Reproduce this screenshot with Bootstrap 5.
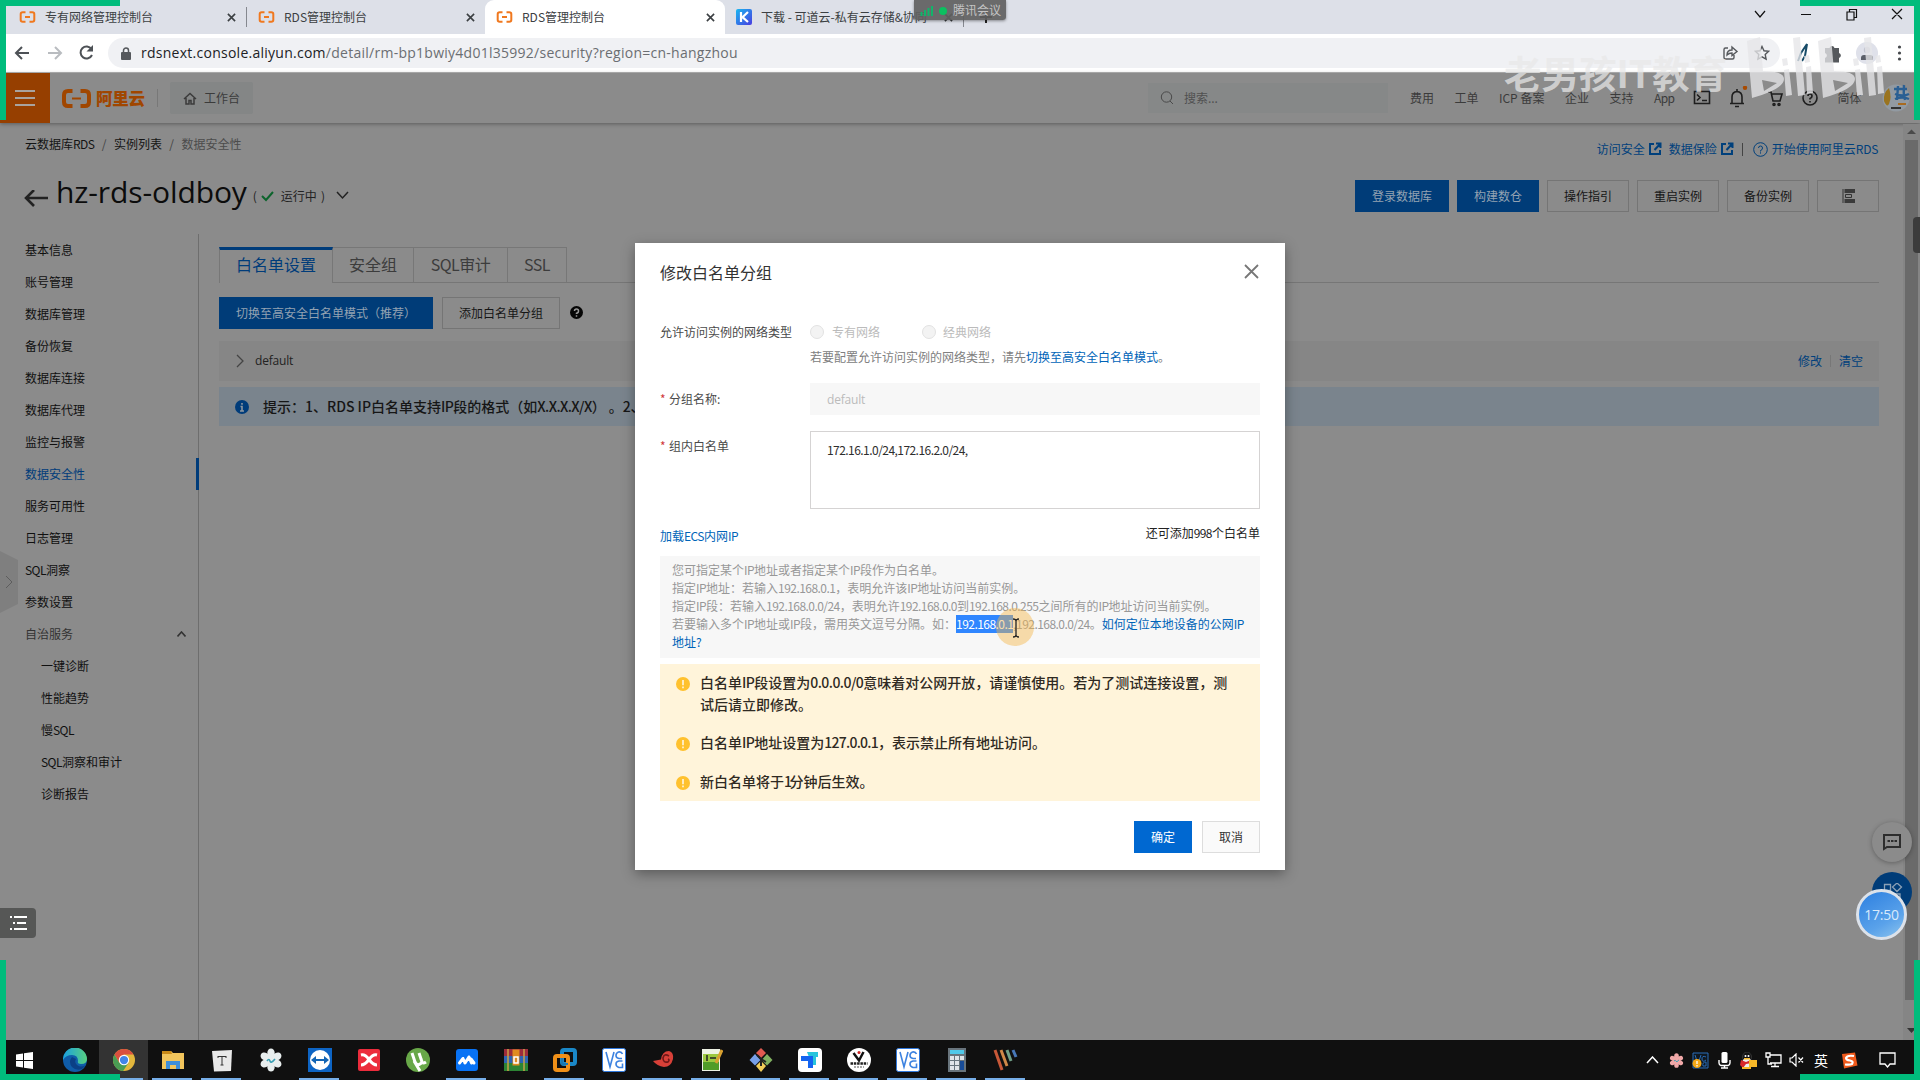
<!DOCTYPE html>
<html lang="zh-CN">
<head>
<meta charset="utf-8">
<title>RDS管理控制台</title>
<link rel="stylesheet" href="https://cdn.jsdelivr.net/npm/bootstrap@5.3.0/dist/css/bootstrap.min.css">
<style>
body{width:1920px;height:1080px;overflow:hidden;background:#8b8b8b;color:#161616;font-family:"Noto Sans CJK SC","Liberation Sans",sans-serif;font-size:12px;line-height:18px;-webkit-font-smoothing:antialiased}
svg{display:block;flex:none}
a{text-decoration:none}
.n{letter-spacing:-.55px}
.ui{font-family:"Open Sans","Noto Sans CJK SC",sans-serif}
/* browser chrome */
.tabstrip{height:34px;background:#dde0e8;color:#3c4043}
.btab{width:238px;height:34px;padding:0 10px 0 11px;white-space:nowrap}
.btab.on{background:#fff;border-radius:9px 9px 0 0;width:240px}
.btab .ttl{flex:1;margin-left:9px;overflow:hidden}
.vsep{width:1px;height:20px;background:#85888f}
.toolbar{height:39px;background:#fff;border-bottom:1px solid #b5b5b5}
.omni{height:30px;width:1672px;margin-left:9px;border-radius:15px;background:#f0f1f4;color:#6b6e72;font-size:14px}
.omni b{font-weight:400;color:#202124}
.url{letter-spacing:.26px;margin-left:10px}
/* console header */
.chead{height:50px;box-shadow:0 1px 4px rgba(0,0,0,.35);position:relative;background:#8b8b8b;color:#3b3b3b}
.burger{width:50px;height:50px;background:#963f00}
.brand{color:#a04600;font-size:16.5px;font-weight:900;letter-spacing:-.2px}
.bench{width:83px;height:32px;background:#848686;border-radius:2px}
.srch{width:240px;height:30px;background:#868888;color:#505050}
.dk{color:#141414}
.bl{color:#00407c}
.title-row{height:44px}
.h-name{font-size:30px;line-height:36px;color:#0c0c0c;letter-spacing:-.1px}
.cbtn{height:32px;border:1px solid #757575;border-radius:0;padding:0;font-size:12px;line-height:28px;color:#161616;background:#8b8b8b;text-align:center}
.cbtn.pri{background:#003c78;border-color:#003c78;color:#93a2b2}
.side{width:199px;border-right:1px solid #6e6e6e}
.side .it{height:32px;line-height:32px;padding-left:25px;color:#101010}
.side .sub{padding-left:41px}
.side .cur{color:#003c7a;border-right:3px solid #003c7a;margin-right:-1px}
.ctabs{height:36px;border-bottom:1px solid #767676}
.ctabs div{height:35px;line-height:32px;font-size:16px;border:1px solid #777;border-left:0;border-bottom:0;text-align:center;color:#3c3c3c}
.ctabs .act{border-left:1px solid #777;border-top:3px solid #003c7a;height:36px;line-height:28px;color:#003c7a;background:#8b8b8b}
.grow-row{height:40px;background:#868686}
.tip{height:39px;background:#7a848d;font-size:14px;font-weight:500;color:#161616;text-spacing-trim:space-all}
/* dialog */
.dlg{position:absolute;left:635px;top:243px;width:650px;height:627px;background:#fff;box-shadow:0 4px 12px rgba(0,0,0,.35);padding:0 25px;color:#444}
.dlg .bl{color:#0064b8}
.lab{width:150px;color:#4a4a4a}
.rad{width:14px;height:14px;border-radius:50%;background:#f3f3f3;border:1px solid #e2e2e2}
.inp{width:450px;height:32px;background:#f7f7f7;color:#bbb;padding-left:17px;line-height:33px}
.area{width:450px;height:78px;border:1px solid #d5d3d3;padding:9px 16px;color:#2e2e2e}
.star{color:#d0383a;width:9px}
.note{height:102px;background:#f7f7f7;color:#989898;padding:5px 12px;white-space:nowrap}
.selx{background:#2f86ff;color:#fff;display:inline-block}
.warn{height:137px;background:#fff4da;font-size:14px;line-height:22px;font-weight:500;color:#2f2a22;padding:7px 24px 0 16px}
.warn svg{margin:6px 10px 0 0}
.fbtn{width:58px;height:32px;line-height:30px;border-radius:0;padding:0;font-size:12px;border:1px solid #ddd;background:#fafafa;color:#333}
.fbtn.ok{background:#0068d1;border-color:#0068d1;color:#fff;}
/* taskbar */
.task{position:absolute;left:0;top:1040px;width:1920px;height:40px;background:#101010}
.tk{width:49px;height:40px;position:relative}
.tk.run::after{content:"";position:absolute;left:4px;right:5px;bottom:0;height:2px;background:#76aee8}
/* overlays */
.ov{position:absolute}
.gr{position:absolute;background:#00bc7c}
.fab{width:40px;height:40px;border-radius:50%}
</style>
</head>
<body class="position-relative d-flex flex-column">
<svg width="0" height="0" style="position:absolute">
 <symbol id="ali" viewBox="0 0 16 12"><path d="M6 1.2H3.2Q1.2 1.2 1.2 3V9Q1.2 10.8 3.2 10.8H6M10 1.2h2.800Q14.800 1.200 14.800 3V9q0 1.800-2 1.800H10M5.500 6h5" fill="none" stroke="currentColor" stroke-width="2"/></symbol>
 <symbol id="cls" viewBox="0 0 10 10"><path d="M1 1l8 8M9 1L1 9" fill="none" stroke="currentColor" stroke-width="1.800"/></symbol>
 <symbol id="ext" viewBox="0 0 14 14"><path d="M6 2H2v10h10V8M8 1.500h4.500V6M12.500 1.500L6.500 8" fill="none" stroke="currentColor" stroke-width="2"/></symbol>
 <symbol id="vnc" viewBox="0 0 24 24"><rect x=".5" y=".5" width="23" height="23" rx="2" fill="#fff" stroke="#2f78dc"/><path d="M4 4l4 15 4-15M20.500 6q-1-2.500-4-2-2.500 1-2.500 3.500t3 3h3M20.500 13h-3.500q-3 .5-3 3t3 3.500h3.500v-4" fill="none" stroke="#3c82e0" stroke-width="1.600"/></symbol>
 <symbol id="warn" viewBox="0 0 14 14"><circle cx="7" cy="7" r="7" fill="#ffc12e"/><path d="M7 3v5.300M7 9.600v1.600" stroke="#fff3d8" stroke-width="1.700"/></symbol>
 <symbol id="flower" viewBox="0 0 24 24"><g fill="currentColor"><ellipse cx="12" cy="5" rx="3.700" ry="4.600"/><ellipse cx="12" cy="19" rx="3.700" ry="4.600"/><ellipse cx="12" cy="5" rx="3.700" ry="4.600" transform="rotate(60 12 12)"/><ellipse cx="12" cy="5" rx="3.700" ry="4.600" transform="rotate(120 12 12)"/><ellipse cx="12" cy="5" rx="3.700" ry="4.600" transform="rotate(240 12 12)"/><ellipse cx="12" cy="5" rx="3.700" ry="4.600" transform="rotate(300 12 12)"/><circle cx="12" cy="12" r="5"/></g><path d="M8 13q2-3 3 0t5-2" fill="none" stroke="#3aa0b4" stroke-width="1.600"/></symbol>
</svg>

<!-- browser tabs -->
<div class="tabstrip d-flex align-items-center ps-2 flex-shrink-0">
 <div class="btab d-flex align-items-center"><svg width="17" height="12" color="#f0781e"><use href="#ali"/></svg><span class="ttl">专有网络管理控制台</span><svg width="9" height="9"><use href="#cls"/></svg></div>
 <div class="vsep"></div>
 <div class="btab d-flex align-items-center"><svg width="17" height="12" color="#f0781e"><use href="#ali"/></svg><span class="ttl">RDS管理控制台</span><svg width="9" height="9"><use href="#cls"/></svg></div>
 <div class="btab on d-flex align-items-center"><svg width="17" height="12" color="#f0781e"><use href="#ali"/></svg><span class="ttl">RDS管理控制台</span><svg width="9" height="9"><use href="#cls"/></svg></div>
 <div class="btab d-flex align-items-center"><svg width="16" height="16" viewBox="0 0 16 16"><defs><linearGradient id="kg" x2="1" y2="1"><stop stop-color="#18b8f0"/><stop offset="1" stop-color="#4a3ce0"/></linearGradient></defs><rect width="16" height="16" rx="2" fill="url(#kg)"/><path d="M5 3v10M12 3L6.500 8.200 12 13" fill="none" stroke="#fff" stroke-width="2.200"/></svg><span class="ttl">下载 - 可道云-私有云存储&amp;协同</span><svg width="9" height="9"><use href="#cls"/></svg></div>
 <div class="vsep"></div>
 <svg class="ms-3" width="12" height="12"><path d="M6 0v12M0 6h12" stroke="#222" stroke-width="2"/></svg>
 <svg class="ms-auto" style="margin-right:17px;margin-top:-6px" width="150" height="14" viewBox="0 0 150 14" fill="none" stroke="#111" stroke-width="1.200"><path d="M2 4l5 6 5-6M48 7.500h10M94 5h7v8h-7zM96.500 5V2.500h7v8H101M139 2l10 10M149 2l-10 10"/></svg>
</div>
<!-- address bar -->
<div class="toolbar d-flex align-items-center flex-shrink-0">
 <svg style="margin-left:14px" width="85" height="18" viewBox="0 0 85 18" fill="none" stroke-width="2"><path d="M15 9H2M8 3L2 9l6 6" stroke="#4d5156"/><path d="M34 9h13M41 3l6 6-6 6" stroke="#b9bcc0"/><path d="M77.500 5A6 6 0 1 0 78 11" stroke="#4d5156"/><path d="M79 1v6.500h-6.500z" fill="#4d5156"/></svg>
 <div class="omni d-flex align-items-center ui">
  <svg style="margin-left:13px" width="10" height="13" viewBox="0 0 10 13"><rect y="5" width="10" height="8" rx="1" fill="#55585c"/><path d="M2.500 5V3.500a2.500 2.500 0 0 1 5 0V5" fill="none" stroke="#55585c" stroke-width="1.500"/></svg>
  <span class="url"><b>rdsnext.console.aliyun.com</b>/detail/rm-bp1bwiy4d01l35992/security?region=cn-hangzhou</span>
  <svg class="ms-auto" style="margin-right:9px" width="50" height="16" viewBox="0 0 50 16" fill="none" stroke="#55585c" stroke-width="1.400"><path d="M7 3H4.500Q3 3 3 4.500v8Q3 14 4.500 14h7q1.500 0 1.500-1.500V10M6 10q0-5 5-5V2l5 4.500-5 4V8q-3 0-5 2zM41 1.500l2 4.300 4.600.5-3.400 3.200.9 4.700L41 11.900l-4.100 2.300.9-4.700-3.400-3.200 4.600-.5z"/></svg>
 </div>
 <svg style="margin-left:15px" width="110" height="22" viewBox="0 0 110 22"><path d="M7 19l3-5 2-12-6 9-3 8" fill="none" stroke="#174b68" stroke-width="2"/><path d="M30 6h4.500a2.600 2.600 0 0 1 5 0h4.500v5a2.600 2.600 0 0 1 0 5v4.500H30v-4.500a2.600 2.600 0 0 0 0-5z" fill="#55585c"/><circle cx="72" cy="11" r="11" fill="#dfe1ea"/><circle cx="72" cy="8" r="3.200" fill="#c2c5d0"/><path d="M66 18v-2q0-3 3-3h6q3 0 3 3v2z" fill="#5b5f69"/><g fill="#44474b"><circle cx="104.500" cy="5" r="1.600"/><circle cx="104.500" cy="11" r="1.600"/><circle cx="104.500" cy="17" r="1.600"/></g></svg>
</div>
<!-- console header -->
<div class="chead d-flex align-items-center flex-shrink-0">
 <div class="burger d-flex align-items-center"><svg style="margin-left:15px" width="20" height="18"><path d="M0 2h20M0 9h20M0 16h20" stroke="#a9a39e" stroke-width="2"/></svg></div>
 <svg style="margin-left:12px" width="29" height="19" viewBox="0 0 29 19" fill="none" stroke="#a04600"><path d="M10.500 2H6Q2 2 2 6v7q0 4 4 4h4.500M18.500 2H23q4 0 4 4v7q0 4-4 4h-4.500" stroke-width="4"/><path d="M10 9.500h9" stroke-width="2"/></svg>
 <span class="brand" style="margin-left:5px">阿里云</span>
 <div style="width:1px;height:18px;background:#787878;margin-left:12px"></div>
 <div class="bench d-flex align-items-center" style="margin-left:12px"><svg style="margin-left:13px" width="14" height="13" viewBox="0 0 14 13" fill="none" stroke="#3b3b3b" stroke-width="1.500"><path d="M1 7l6-5.500L13 7M3 6v6h3V8.500h2V12h3V6"/></svg><span style="margin-left:7px">工作台</span></div>
 <div class="srch d-flex align-items-center" style="margin-left:895px"><svg style="margin-left:12px" width="14" height="14" fill="none" stroke="#4a4a4a"><circle cx="6.500" cy="6" r="5.200"/><path d="M10 10l3 3"/></svg><span style="margin-left:10px">搜索...</span></div>
 <div class="d-flex align-items-center" style="margin-left:22px;gap:20.5px">
  <span>费用</span><span>工单</span><span>ICP 备案</span><span>企业</span><span>支持</span><span class="n">App</span>
 </div>
 <svg style="margin-left:19px" width="128" height="24" viewBox="0 0 128 24" fill="none" stroke="#1e1e1e" stroke-width="1.600"><path d="M1.500 5.500h15v12h-15zM4 8.500l3 3-3 3M9 14.500h5M39 17V11q0-5 5-5.500 5 .5 5 5.500v6M37 17.500h14M44 3v2.500M42 20.500h4"/><circle cx="52" cy="1.800" r="2.200" fill="#a84a00" stroke="none"/><path d="M75 6h3l2 9h7l2-7H79"/><circle cx="81" cy="18.500" r="1"/><circle cx="86" cy="18.500" r="1"/><circle cx="117" cy="12" r="7"/><path d="M115 10q0-2 2-2t2 2-2 2.500v1M117 15v1.500"/></svg>
 <span style="margin-left:16px">简体</span>
 <svg class="ms-auto" style="margin-right:9px" width="29" height="32" viewBox="0 0 29 32"><circle cx="14" cy="16" r="13.500" fill="#929aa2"/><path d="M7 6q-6 5-5 13 3 7 5 3 3-7 0-16" fill="#9a7420"/><path d="M12 7h13M13 12q8 3 14 0M16 4l-1 14M22 3q-1 8 1 15M13 17q7-3 14 0" stroke="#2a5f93" stroke-width="2.400" fill="none"/><path d="M9 26h10" stroke="#333" stroke-width="2"/><path d="M16 22h8" stroke="#a86a20" stroke-width="2"/></svg>
</div>
<!-- page heading -->
<div class="d-flex flex-shrink-0 justify-content-between" style="padding:12px 42px 0 25px;height:48px">
 <div class="dk">云数据库<span class="n">RDS</span> <span style="margin:0 4.700px;color:#444"> / </span> 实例列表 <span style="margin:0 4.700px;color:#444"> / </span> <span style="color:#4c4c4c">数据安全性</span></div>
 <div class="bl d-flex align-items-center" style="height:28px">访问安全<svg style="margin:0 7px 0 3px" width="14" height="14"><use href="#ext"/></svg>数据保险<svg style="margin:0 8px 0 3px" width="14" height="14"><use href="#ext"/></svg><span style="width:1px;height:13px;background:#444;margin-right:10px"></span><svg style="margin-right:4px" width="15" height="15" fill="none" stroke="currentColor"><circle cx="7.500" cy="7.500" r="6.800"/><path d="M5.500 6q0-2 2-2t2 2-2 2.500v1M7.500 10.300v1.300"/></svg>开始使用阿里云<span class="n" style="letter-spacing:-.3px">RDS</span></div>
</div>
<div class="title-row d-flex align-items-center flex-shrink-0" style="padding:0 41px 0 24px">
 <svg style="margin-top:14px" width="25" height="20" fill="none" stroke="#222" stroke-width="2.600"><path d="M24 8H2M10 0L2 8l8 8"/></svg>
 <span class="h-name ui" style="margin:-2px 0 0 7px">hz-rds-oldboy</span>
 <span class="d-flex align-items-center" style="margin:5px 0 0 6px;color:#222">(<svg style="margin:0 7px 0 4px" width="13" height="12" fill="none" stroke="#0c642c" stroke-width="2"><path d="M1 6l4 4 7-8"/></svg>运行中<span style="margin-left:4px">)</span><svg style="margin-left:11px" width="13" height="9" fill="none" stroke="#222" stroke-width="1.500"><path d="M1 1l5.500 6L12 1"/></svg></span>
 <div class="ms-auto d-flex gap-2" style="margin-top:6px">
  <button class="btn cbtn pri" style="width:94px">登录数据库</button><button class="btn cbtn pri" style="width:82px">构建数仓</button><button class="btn cbtn" style="width:82px">操作指引</button><button class="btn cbtn" style="width:82px">重启实例</button><button class="btn cbtn" style="width:82px">备份实例</button><button class="btn cbtn d-flex justify-content-center align-items-center" style="width:62px"><svg width="13" height="14"><path d="M1 0v14" stroke="#333"/><path d="M2.500 2H13M2.500 12H13" stroke="#3a3a3a" stroke-width="4"/><path d="M3.500 5.500h6v3h-6z" fill="none" stroke="#333"/></svg></button>
 </div>
</div>
<!-- body -->
<div class="d-flex flex-grow-1" style="padding-top:19px">
 <nav class="side">
  <div class="it">基本信息</div><div class="it">账号管理</div><div class="it">数据库管理</div><div class="it">备份恢复</div><div class="it">数据库连接</div><div class="it">数据库代理</div><div class="it">监控与报警</div><div class="it cur">数据安全性</div><div class="it">服务可用性</div><div class="it">日志管理</div><div class="it"><span class="n">SQL</span>洞察</div><div class="it">参数设置</div>
  <div class="it d-flex justify-content-between align-items-center" style="color:#333;padding-right:12px">自治服务<svg width="9" height="6" fill="none" stroke="#333" stroke-width="1.600"><path d="M.5 5.500l4-4.500 4 4.500"/></svg></div>
  <div class="it sub">一键诊断</div><div class="it sub">性能趋势</div><div class="it sub">慢<span class="n">SQL</span></div><div class="it sub"><span class="n">SQL</span>洞察和审计</div><div class="it sub">诊断报告</div>
 </nav>
 <main class="flex-grow-1" style="padding:13px 41px 0 20px">
  <div class="ctabs d-flex"><div class="act" style="width:114px">白名单设置</div><div style="width:81px">安全组</div><div class="n" style="width:94px">SQL审计</div><div class="n" style="width:59px">SSL</div></div>
  <div class="d-flex align-items-center" style="margin-top:14px"><button class="btn cbtn pri" style="width:214px;text-align:left;padding-left:16px">切换至高安全白名单模式（推荐）</button><button class="btn cbtn" style="width:118px;margin-left:9px">添加白名单分组</button><svg style="margin:-2px 0 0 10px" width="13" height="13"><circle cx="6.500" cy="6.500" r="6.500" fill="#060606"/><path d="M4.500 5q0-2 2-2t2 2-2 2.300v.7M6.500 9.200v1.500" fill="none" stroke="#999" stroke-width="1.500"/></svg></div>
  <div class="grow-row d-flex align-items-center" style="margin-top:12px;padding:0 16px 0 17px"><svg width="8" height="14" fill="none" stroke="#444" stroke-width="1.300"><path d="M1 1l6 6-6 6"/></svg><span style="margin-left:11px;color:#222;letter-spacing:-.2px" class="ui">default</span><span class="ms-auto bl">修改</span><span style="width:1px;height:12px;background:#777;margin:0 8px"></span><span class="bl">清空</span></div>
  <div class="tip d-flex align-items-center" style="margin-top:6px;padding-left:16px"><svg width="14" height="14"><circle cx="7" cy="7" r="7" fill="#003c7a"/><path d="M7 3v1.800M5.500 6.500H7V11M5 11h4" fill="none" stroke="#8d97a0" stroke-width="1.600"/></svg><span style="margin:-2px 0 0 14px">提示：1、RDS IP白名单支持<span class="n">IP</span>段的格式（如<span style="letter-spacing:-.6px">X.X.X.X/X</span>）<span style="margin-left:3px">。</span>2、</span></div>
 </main>
</div>

<!-- page scrollbar and side handles -->
<div class="ov" style="left:1903px;top:124px;width:17px;height:916px;background:#858585"></div>
<div class="ov" style="left:1905px;top:140px;width:13px;height:860px;background:#6a6a6a"></div>
<svg class="ov" style="left:1907px;top:129px" width="9" height="6"><path d="M0 5l4.500-4.500L9 5z" fill="#4a4a4a"/></svg>
<svg class="ov" style="left:1907px;top:1028px" width="9" height="6"><path d="M0 0l4.500 5L9 0z" fill="#333"/></svg>
<div class="ov" style="left:1913px;top:217px;width:7px;height:36px;background:#3c3c3c;border-radius:4px 0 0 4px"></div>
<svg class="ov" style="left:0;top:551px" width="18" height="62"><path d="M0 0l18 9v44L0 62z" fill="#7f7f7f"/><path d="M6 25l6 6-6 6" fill="none" stroke="#5d5d5d"/></svg>
<div class="ov d-flex align-items-center" style="left:0;top:908px;width:36px;height:30px;background:#565756;border-radius:0 4px 4px 0"><svg style="margin-left:10px" width="17" height="14"><path d="M0 1h2M4 1h13M3 7h2M7 7h9M0 13h2M4 13h13" stroke="#fff" stroke-width="2"/></svg></div>
<div class="ov fab d-flex align-items-center justify-content-center" style="left:1872px;top:822px;background:#8b8b8b;box-shadow:0 1px 5px rgba(0,0,0,.3)"><svg width="20" height="18" fill="none" stroke="#2d2d2d" stroke-width="2"><path d="M2 16V2h16v12H5zM5.500 8h2.500M9 8h2.500M12.500 8H15" /></svg></div>
<div class="ov fab" style="left:1872px;top:872px;background:#003c78"><svg style="margin:11px" width="20" height="18" fill="none" stroke="#8ba0b5" stroke-width="1.300"><path d="M1.500 1.500h6v6h-6zM14 0l4.500 4L14 8.500 9.500 4zM1.500 11h6v6h-6zM11 11h6v6h-6z"/></svg></div>
<div class="ov d-flex align-items-center justify-content-center ui" style="left:1856px;top:889px;width:51px;height:51px;border-radius:50%;border:3px solid #dce2ea;background:linear-gradient(150deg,#2c7fe0,#5aa2ea 65%,#8cc4ee);color:#d8eafb;font-size:14px;letter-spacing:-.2px">17:50</div>

<!-- dialog -->
<div class="dlg" role="dialog">
 <div class="d-flex justify-content-between align-items-center" style="height:57px;font-size:16px;color:#333">修改白名单分组<svg width="15" height="15" viewBox="0 0 15 15" style="margin-right:1px"><path d="M1 1l13 13M14 1L1 14" stroke="#777" stroke-width="1.800"/></svg></div>
 <div class="d-flex align-items-center" style="margin-top:23px"><span class="lab" style="margin-top:-1px">允许访问实例的网络类型</span><span class="rad"></span><span style="margin-left:8px;color:#bbb;width:48px">专有网络</span><span class="rad" style="margin-left:42px"></span><span style="margin-left:7px;color:#bbb">经典网络</span></div>
 <div style="margin:7px 0 0 150px;color:#808080">若要配置允许访问实例的网络类型，请先<a class="bl">切换至高安全白名单模式</a>。</div>
 <div class="d-flex align-items-center" style="margin-top:17px"><span class="lab d-flex" style="margin-top:-1px"><span class="star">*</span>分组名称:</span><div class="inp ui" style="letter-spacing:-.2px">default</div></div>
 <div class="d-flex" style="margin-top:16px"><span class="lab d-flex" style="padding-top:6px"><span class="star">*</span>组内白名单</span><div class="area"><span class="n">172.16.1.0/24,172.16.2.0/24,</span></div></div>
 <div class="d-flex justify-content-between" style="height:47px;padding-top:15px"><a class="bl" style="padding-top:3px">加载<span class="n">ECS</span>内网<span class="n">IP</span></a><span style="color:#222">还可添加<span class="n">998</span>个白名单</span></div>
 <div class="note">您可指定某个<span class="n">IP</span>地址或者指定某个<span class="n">IP</span>段作为白名单。<br>指定<span class="n">IP</span>地址：若输入<span class="n">192.168.0.1</span>，表明允许该<span class="n">IP</span>地址访问当前实例。<br>指定<span class="n">IP</span>段：若输入<span class="n">192.168.0.0/24</span>，表明允许<span class="n">192.168.0.0</span>到<span class="n">192.168.0.255</span>之间所有的<span class="n">IP</span>地址访问当前实例。<br>若要输入多个<span class="n">IP</span>地址或<span class="n">IP</span>段，需用英文逗号分隔。如：<span class="n selx">192.168.0.1</span><span class="n">,192.168.0.0/24</span>。<a class="bl">如何定位本地设备的公网<span class="n">IP</span><br>地址?</a></div>
 <div class="warn" style="margin-top:6px">
  <div class="d-flex" style="height:60px"><svg width="14" height="14"><use href="#warn"/></svg><span>白名单<span class="n">IP</span>段设置为<span class="n">0.0.0.0/0</span>意味着对公网开放，请谨慎使用。若为了测试连接设置，测<br>试后请立即修改。</span></div>
  <div class="d-flex" style="height:39px"><svg width="14" height="14"><use href="#warn"/></svg><span>白名单<span class="n">IP</span>地址设置为<span style="letter-spacing:-.75px">127.0.0.1</span>，表示禁止所有地址访问。</span></div>
  <div class="d-flex"><svg width="14" height="14"><use href="#warn"/></svg><span>新白名单将于<span style="letter-spacing:-2.500px">1</span>分钟后生效。</span></div>
 </div>
 <div class="d-flex justify-content-end" style="margin-top:20px;gap:10px"><button class="btn fbtn ok">确定</button><button class="btn fbtn">取消</button></div>
</div>
<!-- pointer halo -->
<svg class="ov" style="left:996px;top:608px" width="40" height="40"><circle cx="19" cy="19" r="19" fill="#f5b54a" opacity=".45"/><path d="M17 11q3 0 3 2v14q0 2-3 2M23 11q-3 0-3 2M23 29q-3 0-3-2" fill="none" stroke="#222" stroke-width="1.300"/></svg>

<!-- taskbar -->
<div class="task d-flex">
 <div class="tk d-flex align-items-center justify-content-center" style="width:50px;padding-right:2px"><svg width="17" height="17"><path d="M0 2.500l7-1v6.500H0zM8 1.300L17 0v8H8zM0 9h7v6.500l-7-1zM8 9h9v8l-9-1.300z" fill="#fff"/></svg></div>
 <div class="tk d-flex align-items-center justify-content-center"><svg width="24" height="24"><defs><linearGradient id="eg"><stop stop-color="#1aa0e0"/><stop offset="1" stop-color="#58d080"/></linearGradient></defs><circle cx="12" cy="12" r="12" fill="#0f5ca8"/><path d="M0 12A12 12 0 0 1 24 11q0 5-6 5-4 0-3-3 0-6-6-6-6 0-9 5" fill="url(#eg)"/><path d="M9 9q-4 5 0 10 4 4 10 2l4-4q-5 3-9 0-3-3-1-6z" fill="#0b3f86"/></svg></div>
 <div class="tk run d-flex align-items-center justify-content-center" style="background:#333"><svg width="22" height="22" viewBox="0 0 24 24"><circle cx="12" cy="12" r="12" fill="#e2b63c"/><path d="M1.600 6A12 12 0 0 1 22.400 6H12L6.800 15z" fill="#d9503f"/><path d="M1.600 6A12 12 0 0 0 11 24l6-9H6.800z" fill="#4a9d54"/><circle cx="12" cy="12" r="5.700" fill="#fff"/><circle cx="12" cy="12" r="4.500" fill="#4285e8"/></svg></div>
 <div class="tk run d-flex align-items-center justify-content-center"><svg width="22" height="20"><path d="M0 1h9l2 2h11v16H0z" fill="#f2c55c"/><path d="M0 1h9l1 3H0z" fill="#c98a18"/><path d="M4 19v-8h14v8h-4v-4H8v4z" fill="#3f8fd8"/></svg></div>
 <div class="tk run d-flex align-items-center justify-content-center"><svg width="22" height="23"><path d="M1 2l20-1-1 21-17 .5z" fill="#e9e9e9"/><path d="M7 7.500h8M11 7.500V16M9.500 16h3M7 7v2M15 7v2" stroke="#333" fill="none"/></svg></div>
 <div class="tk d-flex align-items-center justify-content-center"><svg width="24" height="24" color="#e8eeee"><use href="#flower"/></svg></div>
 <div class="tk run d-flex align-items-center justify-content-center"><svg width="24" height="24"><rect width="24" height="24" fill="#0d64c4"/><circle cx="12" cy="12" r="10" fill="#fff"/><path d="M3 12l5-4v3h8V8l5 4-5 4v-3H8v3z" fill="#1264b4"/></svg></div>
 <div class="tk d-flex align-items-center justify-content-center"><svg width="22" height="22"><rect width="22" height="22" rx="2" fill="#ec2c3c"/><path d="M3 6q4-1 8 4.500T19 16M19 6q-4-1-8 4.500T3 16" fill="none" stroke="#fff" stroke-width="3"/></svg></div>
 <div class="tk d-flex align-items-center justify-content-center"><svg width="24" height="24"><circle cx="12" cy="12" r="12" fill="#68a848"/><path d="M6 5l3 9q2 4 5 2 3-1 1-5l-2-6M15 14q2 2 5 0M8 13l6 10" fill="none" stroke="#fff" stroke-width="3"/></svg></div>
 <div class="tk run d-flex align-items-center justify-content-center"><svg width="22" height="22"><rect width="22" height="22" rx="3" fill="#0872f4"/><path d="M3.500 14l3.500-4.500M9 14l4-6M15 10l3 4M7 9.500l2 4.500M13 8l2.500 6" fill="none" stroke="#fff" stroke-width="3" stroke-linecap="round"/></svg></div>
 <div class="tk d-flex align-items-center justify-content-center"><svg width="24" height="24"><path d="M0 1h24v7H0z" fill="#9c2c3c"/><path d="M0 8h24v7H0z" fill="#2c64b4"/><path d="M0 15h24v8H0z" fill="#2c8434"/><path d="M4 1v22M20 1v22" stroke="#c8a048" stroke-width="1.500"/><path d="M8.500 1.500h7v16h-7z" fill="#e08c20"/><path d="M10 9h4v6h-4z" fill="none" stroke="#fff" stroke-width="1.500"/></svg></div>
 <div class="tk run d-flex align-items-center justify-content-center"><svg width="24" height="24" fill="none" stroke-width="4"><rect x="9" y="2" width="13" height="14" rx="2" stroke="#1a88c8"/><rect x="2" y="8" width="13" height="14" rx="2" stroke="#f09018"/><path d="M9 10v6h6" stroke="#1a78b0" stroke-width="2"/></svg></div>
 <div class="tk d-flex align-items-center justify-content-center"><svg width="24" height="24"><use href="#vnc"/></svg></div>
 <div class="tk run d-flex align-items-center justify-content-center"><svg width="24" height="24"><path d="M2 13l8-1.500Q11 3 18 3q5 1.500 4 8-2 8-9 8-7-1-11-6z" fill="#d84038"/><path d="M18 8q-5-3-6 2 0 5 5 4 2-2 0-3" fill="none" stroke="#701818" stroke-width="1.600"/></svg></div>
 <div class="tk run d-flex align-items-center justify-content-center"><svg width="22" height="24"><path d="M1 1h18v22H1z" fill="#eef2e4"/><path d="M2 6h16v16H2z" fill="#9cc840"/><path d="M2 14h16v8H2z" fill="#509c28"/><path d="M6 7v6M9 10h6" stroke="#222" stroke-width="1.500"/><path d="M21 2l-6 13" stroke="#d8a030" stroke-width="3"/></svg></div>
 <div class="tk run d-flex align-items-center justify-content-center"><svg width="24" height="24"><path d="M12 0l5 5-5 5-5-5z" fill="#e05a50"/><path d="M6 6l5.500 6L6 17.500.500 12z" fill="#78a0e8"/><path d="M18 6l5.500 6-5.500 5.500-5.500-5.500z" fill="#80b060"/><path d="M12 13l5 5-5 6-5-6z" fill="#f0cc58"/><path d="M8 7l4 4v7M12 11l5 3" stroke="#222" stroke-width="2" fill="none"/></svg></div>
 <div class="tk run d-flex align-items-center justify-content-center"><svg width="24" height="24"><rect width="24" height="24" rx="4" fill="#fff"/><path d="M9 4h11v5h-2v8h-4z" fill="#28c4dc"/><path d="M3 8h12v12h-5v-7H3z" fill="#1464f0"/></svg></div>
 <div class="tk run d-flex align-items-center justify-content-center"><svg width="24" height="24"><circle cx="12" cy="12" r="12" fill="#fff"/><path d="M6.500 5L12 12.500 16.500 4" stroke="#111" stroke-width="2.500" fill="none"/><circle cx="12" cy="4.500" r="1.500" fill="#c22"/><path d="M3.500 15.500h17" stroke="#222" stroke-width="2.600" stroke-dasharray="2.500 .8"/><path d="M7 19h10" stroke="#555" stroke-width="1.200" stroke-dasharray="2 1"/></svg></div>
 <div class="tk run d-flex align-items-center justify-content-center"><svg width="24" height="24"><use href="#vnc"/></svg></div>
 <div class="tk run d-flex align-items-center justify-content-center"><svg width="18" height="24"><path d="M0 0h18v24H0z" fill="#68747c"/><path d="M2 2h14v4H2z" fill="#50c8e8"/><g fill="#e0e4e8"><path d="M2 8h4v4H2zM7 8h4v4H7zM12 8h4v4h-4zM2 13h4v4H2zM7 13h4v4H7zM2 18h4v4H2zM7 18h4v4H7z"/></g><path d="M12 13h4v9h-4z" fill="#184c98"/></svg></div>
 <div class="tk run d-flex align-items-center justify-content-center"><svg width="26" height="24" fill="none" stroke-width="3"><path d="M2 2l7 20" stroke="#c85838"/><path d="M8 2l6 16" stroke="#d08848"/><path d="M14 2l4 11" stroke="#70a088"/><path d="M20 2l3 7" stroke="#4878b8"/></svg></div>
 <div class="ms-auto d-flex align-items-center" style="padding:0 24px 0 0;color:#fff">
  <svg width="13" height="8" fill="none" stroke="#fff" stroke-width="1.500"><path d="M1 7l5.500-6L12 7"/></svg>
  <svg style="margin-left:10px" width="15" height="15" color="#f0a8a8"><use href="#flower"/></svg>
  <svg style="margin-left:8px" width="17" height="17"><path d="M1 1h15v15H1z" fill="#101820" stroke="#286cb8"/><path d="M3 3l3 9 3-9M14 5q-4-2-4 2t4 1M14 10q-4 0-3 4h3z" fill="none" stroke="#286cb8"/><circle cx="5" cy="11.500" r="4.500" fill="#f4a818"/><path d="M5 9v3M5 13v1.500" stroke="#fff" stroke-width="1.300"/></svg>
  <svg style="margin-left:9px" width="13" height="17"><rect x="3.500" width="6" height="11" rx="1.500" fill="#fff"/><path d="M1 8v3q0 2 2 2.500h7q2-.5 2-2.500V8M6.500 13v3M3 16h7" fill="none" stroke="#fff" stroke-width="1.400"/></svg>
  <svg style="margin-left:9px" width="18" height="17"><ellipse cx="7" cy="5" rx="4.500" ry="5" fill="#141414" stroke="#555" stroke-width=".5"/><ellipse cx="7" cy="11" rx="5" ry="5" fill="#eee"/><path d="M1 8l5 2 5-2 1 3-6 1-3 4-3-3z" fill="#d8282c"/><circle cx="5.500" cy="4" r="1" fill="#fff"/><circle cx="8.500" cy="4" r="1" fill="#fff"/><path d="M4 6h6v1.500H4zM2 15h9v2H2zM9 8h8v7h-8z" fill="#f8b828"/></svg>
  <svg style="margin-left:7px" width="17" height="16" fill="none" stroke="#fff" stroke-width="1.300"><path d="M5 3h11v8H5M1 1h4v4H1zM3 5v7h4M10 11v3M6 14.500h8"/></svg>
  <svg style="margin-left:7px" width="15" height="14" fill="none" stroke="#fff" stroke-width="1.200"><path d="M1 5h2l4-4v12L3 9H1zM9.500 4.500l4.500 5M14 4.500l-4.500 5"/></svg>
  <span style="margin-left:10px;font-size:14px">英</span>
  <svg style="margin-left:13px" width="17" height="17"><path d="M1 2l13-1.500 2.500 13L3 16.500z" fill="#f05a1c"/><path d="M13 4Q6 3 5 6q0 2 4 2.500 4 1 2 3.500-2 1-7 .5" fill="none" stroke="#fff" stroke-width="2.200"/></svg>
  <svg style="margin-left:21px" width="17" height="16" fill="none" stroke="#fff" stroke-width="1.300"><path d="M1 1h15v11h-5l-2.500 3L6 12H1z"/></svg>
 </div>
</div>

<!-- screen share bar -->
<div class="ov d-flex align-items-center" style="left:914px;top:0;width:92px;height:20px;padding:0 0 4px 6px;background:rgba(95,95,95,.92);border-radius:0 0 3px 3px;box-shadow:0 1px 3px rgba(0,0,0,.4);color:#c4c4c4"><svg width="13" height="10" style="margin-top:5px"><path d="M1.500 10V6M5 10V4M8.500 10V2M12 10V0" stroke="#12b46a" stroke-width="2"/></svg><svg style="margin:6px 6px 0 6px" width="8" height="8"><circle cx="4" cy="4" r="4" fill="#0cc060"/></svg><span style="margin-top:4px">腾讯会议</span></div>
<div class="gr" style="left:0;top:0;width:120px;height:6px"></div><div class="gr" style="left:0;top:0;width:6px;height:120px"></div>
<div class="gr" style="left:1800px;top:0;width:120px;height:6px"></div><div class="gr" style="left:1914px;top:0;width:6px;height:120px"></div>
<div class="gr" style="left:0;top:960px;width:6px;height:120px"></div><div class="gr" style="left:0;top:1074px;width:120px;height:6px"></div>
<div class="gr" style="left:1914px;top:960px;width:6px;height:120px"></div><div class="gr" style="left:1800px;top:1074px;width:120px;height:6px"></div>
<!-- channel watermark -->
<div class="ov" style="left:1504px;top:49px;font-size:37.500px;line-height:46px;font-weight:700;color:rgba(232,232,232,.72);white-space:nowrap">老男孩IT教育</div>
<svg class="ov" style="left:1746px;top:34px" width="142" height="68" viewBox="0 0 142 68"><g id="bb" fill="#e6e6e8" fill-opacity=".78" fill-rule="evenodd"><path d="M1 7l13-4 3 34q21 0 21 8 0 10-32 19zM16 46l2 11 13-8z"/><path d="M36 25l5-1 1 7-5 1zM38 36l5-1 3 26-6 1zM47 4l7-1 5 58-7 1zM58 22l5-1 1 7-5 1zM60 33l5-1 2 27-6 1z"/></g><use href="#bb" x="71"/></svg>
<script src="https://cdn.jsdelivr.net/npm/bootstrap@5.3.0/dist/js/bootstrap.bundle.min.js"></script>
</body>
</html>
